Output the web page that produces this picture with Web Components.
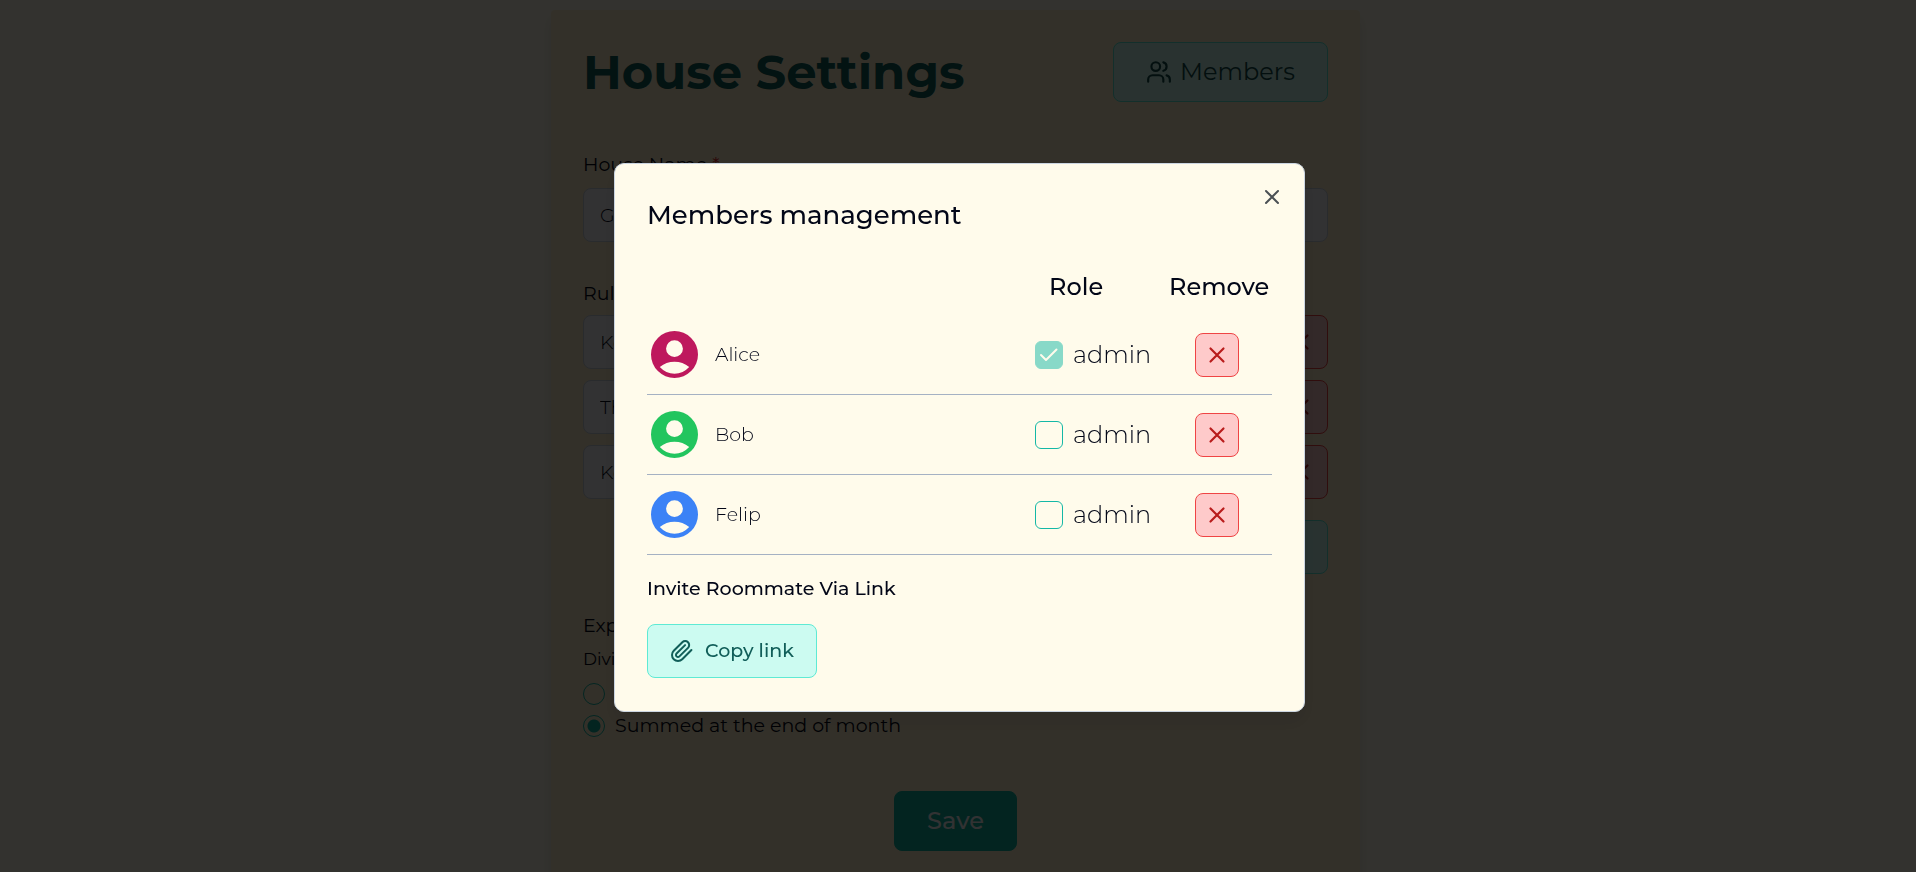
<!DOCTYPE html>
<html lang="en">
<head>
<meta charset="utf-8">
<meta name="viewport" content="width=device-width, initial-scale=1">
<title>House Settings</title>
<style>
  html { overflow: hidden; }
  body {
    margin: 0;
    min-height: 100vh;
    background: #fffbeb;
    color: #020617;
    font-family: Montserrat, Inter, "Open Sans", sans-serif;
    font-size: 19px;
    line-height: 28px;
  }
</style>
</head>
<body>
<house-settings></house-settings>
<members-dialog></members-dialog>

<script>
const ICONS = {
  users: '<path d="M16 21v-2a4 4 0 0 0-4-4H6a4 4 0 0 0-4 4v2"/><circle cx="9" cy="7" r="4"/><path d="M22 21v-2a4 4 0 0 0-3-3.87M16 3.13a4 4 0 0 1 0 7.75"/>',
  cross: '<path d="M18 6 6 18M6 6l12 12"/>',
  clip: '<path d="m21.44 11.05-9.19 9.19a6 6 0 0 1-8.49-8.49l8.57-8.57A4 4 0 1 1 18 8.84l-8.59 8.57a2 2 0 0 1-2.83-2.83l8.49-8.48"/>',
  plus: '<path d="M12 5v14M5 12h14"/>'
};

function define(name, render) {
  customElements.define(name, class extends HTMLElement {
    connectedCallback() {
      if (this.shadowRoot) return;
      const template = document.createElement('template');
      template.innerHTML = '<style>*{box-sizing:border-box}</style>' + render(this);
      this.attachShadow({ mode: 'open' }).append(template.content.cloneNode(true));
    }
  });
}

define('line-icon', el => `
  <style>
    :host { display: block; width: 26px; height: 26px; }
    :host([size="small"]) { width: 24px; height: 24px; }
    svg { display: block; width: 100%; height: 100%; fill: none; stroke: currentColor;
      stroke-width: 2; stroke-linecap: round; stroke-linejoin: round; }
  </style>
  <svg viewBox="0 0 24 24" aria-hidden="true">${ICONS[el.getAttribute('name')]}</svg>`);

define('app-button', el => `
  <style>
    :host { display: block; }
    button {
      display: flex; align-items: center; justify-content: center; gap: 8px;
      width: 100%; height: 60px; margin: 0; padding: 0 32px;
      border: 1px solid #5eead4; border-radius: 8px;
      background: #ccfbf1; color: #134e4a;
      font: inherit; font-size: 24px; cursor: pointer;
    }
    :host([kind="primary"]) button { border-color: #0fb4a2; background: #0fb4a2; color: #f8fafc; font-weight: 500; }
    :host([kind="copy"]) button { height: 54px; padding: 0 22px; gap: 11px; color: #115e59; font-size: 19px; font-weight: 500; }
    :host([kind="add"]) button { height: 54px; padding: 0 22px; font-size: 19px; }
    :host([kind="remove"]) button { width: 54px; height: 54px; padding: 0; }
    :host([kind="remove-small"]) button { width: 44px; height: 44px; padding: 0; }
    :host([kind^="remove"]) button { border-color: #ef4444; background: #fecaca; color: #b91c1c; }
  </style>
  <button type="button" ${el.hasAttribute('label') ? `aria-label="${el.getAttribute('label')}"` : ''}><slot></slot></button>`);

define('text-field', el => `
  <style>
    :host { display: block; flex: 1; }
    label { display: block; margin-bottom: 9px; }
    .star { color: #dc2626; }
    input {
      display: block; width: 100%; height: 54px; padding: 0 16px;
      border: 1px solid #cbd5e1; border-radius: 8px;
      background: #f8fafc; color: inherit; font: inherit; font-weight: 300;
    }
  </style>
  ${el.hasAttribute('label') ? `<label for="field">${el.getAttribute('label')} <span class="star">*</span></label>` : ''}
  <input id="field" type="text" value="${el.getAttribute('value')}" ${el.hasAttribute('name') ? `aria-label="${el.getAttribute('name')}"` : ''}>`);

define('rule-row', el => `
  <style>:host { display: flex; gap: 11px; }</style>
  <text-field name="Rule" value="${el.getAttribute('value')}"></text-field>
  <app-button kind="remove" label="Remove rule"><line-icon name="cross"></line-icon></app-button>`);

define('house-settings', () => `
  <style>
    :host { display: flex; justify-content: center; padding: 10px 5px 0 0; }
    main {
      width: 100%; max-width: 809px; padding: 32px;
      border-radius: 4px; background: #fff0cd;
      box-shadow: 0 8px 14px rgb(0 0 0 / .1);
    }
    header { display: flex; align-items: center; justify-content: space-between; margin-bottom: 49px; }
    h1 { margin: 0; color: #115e59; font-size: 48px; line-height: 60px; font-weight: 700; }
    h2 { margin: 38px 0 7px; font-size: 19px; line-height: 28px; font-weight: 400; }
    .rules { display: grid; gap: 11px; margin-bottom: 21px; }
    .add { display: flex; justify-content: flex-end; }
    fieldset { display: grid; gap: 10px; margin: 0; padding: 0; border: 0; }
    legend { margin-bottom: 12px; padding: 0; font-size: 17px; line-height: 24px; }
    fieldset label { display: flex; align-items: center; gap: 10px; line-height: 22px; }
    input[type=radio] {
      appearance: none; width: 22px; height: 22px; margin: 0;
      border: 1px solid #14b8a6; border-radius: 50%;
    }
    input[type=radio]:checked { background: radial-gradient(circle, #0fb4a2 6px, transparent 7px); }
    .save { display: flex; justify-content: center; margin-top: 54px; }
  </style>
  <main>
    <header>
      <h1>House Settings</h1>
      <app-button><line-icon name="users"></line-icon>Members</app-button>
    </header>
    <text-field label="House Name" value="Green House"></text-field>
    <h2>Rules</h2>
    <div class="rules">
      <rule-row value="Keep it clean"></rule-row>
      <rule-row value="Throw out trash"></rule-row>
      <rule-row value="Keep quiet"></rule-row>
    </div>
    <div class="add"><app-button kind="add" label="Add rule"><line-icon name="plus"></line-icon></app-button></div>
    <h2>Expenses</h2>
    <fieldset>
      <legend>Divided</legend>
      <label><input type="radio" name="split" aria-label="Immediately"></label>
      <label><input type="radio" name="split" checked>Summed at the end of month</label>
    </fieldset>
    <div class="save"><app-button kind="primary">Save</app-button></div>
  </main>`);

define('member-avatar', () => `
  <style>
    :host { display: block; width: 47px; height: 47px; }
    svg { display: block; width: 100%; height: 100%; fill: currentColor; }
  </style>
  <svg viewBox="0 0 24 24" aria-hidden="true">
    <path fill-rule="evenodd" d="M12 0a12 12 0 1 1 0 24a12 12 0 0 1 0-24zM12 4.7a4.3 4.3 0 1 0 0 8.6a4.3 4.3 0 0 0 0-8.6zM4.5 18.4a11.8 11.8 0 0 1 15 0a10 10 0 0 1-15 0z"/>
  </svg>`);

define('role-checkbox', el => `
  <style>
    :host { display: block; }
    label { display: flex; align-items: center; gap: 10px; font-size: 24px; line-height: 28px; font-weight: 300; }
    .box { display: grid; width: 28px; height: 28px; }
    .box > * { grid-area: 1 / 1; }
    input { appearance: none; width: 28px; height: 28px; margin: 0; border: 1px solid #14b8a6; border-radius: 6px; }
    input:checked { background: #14b8a6; }
    input:disabled { opacity: .5; }
    svg { display: none; z-index: 1; width: 28px; height: 28px; fill: none; stroke: #fffbeb; stroke-width: 2; stroke-linecap: round; stroke-linejoin: round; pointer-events: none; }
    input:checked + svg { display: block; }
  </style>
  <label>
    <span class="box">
      <input type="checkbox" ${el.hasAttribute('checked') ? 'checked disabled' : ''}>
      <svg viewBox="0 0 28 28" aria-hidden="true"><path d="m6 14 5 5L21.5 8.500"/></svg>
    </span>
    <slot></slot>
  </label>`);

const MEMBERS = [
  { name: 'Alice', color: '#be185d', admin: true },
  { name: 'Bob', color: '#22c55e', admin: false },
  { name: 'Felip', color: '#3b82f6', admin: false }
];

define('members-dialog', () => `
  <style>
    :host {
      position: fixed; inset: 0; display: grid; place-items: center;
      padding: 3px 0 0 3px; background: rgb(0 0 0 / .8);
    }
    section {
      position: relative; width: 100%; max-width: 691px; padding: 33px 32px;
      border: 1px solid #cbd5e1; border-radius: 10px; background: #fffbeb;
      box-shadow: 0 10px 18px rgb(0 0 0 / .1);
    }
    h2 { margin: 0 0 25px; font-size: 26px; line-height: 36px; font-weight: 500; }
    .close {
      position: absolute; top: 21px; right: 20px; padding: 0;
      border: 0; background: none; color: #4b5054; cursor: pointer;
    }
    table { width: 100%; border-collapse: separate; border-spacing: 0; table-layout: fixed; }
    .role { width: 134px; }
    .remove { width: 103px; }
    th, td { padding: 0; text-align: left; }
    thead th { height: 57px; font-size: 24px; font-weight: 500; }
    thead th.role { padding-left: 14px; }
    tbody td, tbody th { height: 80px; border-bottom: 1px solid #a5b1c3; font-weight: 300; }
    .member { display: flex; align-items: center; gap: 17px; padding-left: 4px; }
    td:last-child { padding-left: 26px; }
    h3 { margin: 20px 0 21px; font-size: 19px; line-height: 28px; font-weight: 500; }
    .invite { display: flex; }
  </style>
  <section role="dialog" aria-modal="true" aria-labelledby="title">
    <h2 id="title">Members management</h2>
    <button class="close" type="button" aria-label="Close"><line-icon name="cross" size="small"></line-icon></button>
    <table>
      <thead><tr><td></td><th class="role" scope="col">Role</th><th class="remove" scope="col">Remove</th></tr></thead>
      <tbody>${MEMBERS.map(m => `
        <tr>
          <th scope="row"><div class="member"><member-avatar style="color:${m.color}"></member-avatar>${m.name}</div></th>
          <td><role-checkbox ${m.admin ? 'checked' : ''}>admin</role-checkbox></td>
          <td><app-button kind="remove-small" label="Remove ${m.name}"><line-icon name="cross"></line-icon></app-button></td>
        </tr>`).join('')}
      </tbody>
    </table>
    <h3>Invite Roommate Via Link</h3>
    <div class="invite"><app-button kind="copy"><line-icon name="clip" size="small"></line-icon>Copy link</app-button></div>
  </section>`);
</script>
</body>
</html>
